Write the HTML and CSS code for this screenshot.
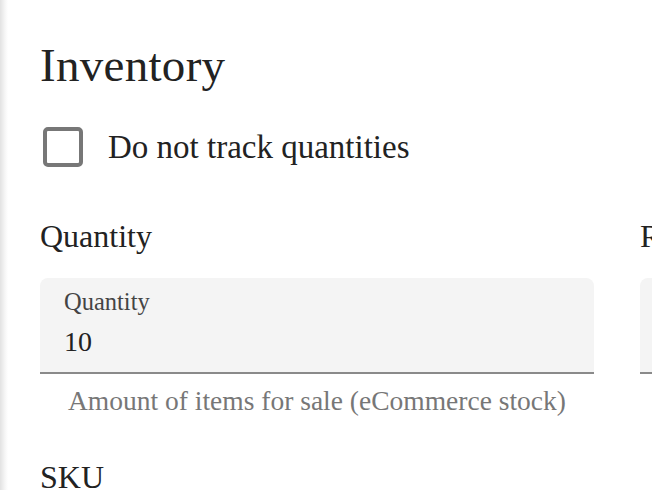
FILE: index.html
```html
<!DOCTYPE html>
<html lang="en">
<head>
<meta charset="utf-8">
<title>Inventory</title>
<link rel="stylesheet" href="styles.css">
</head>
<body>
<div class="page">
  <section class="card">
    <h2 class="card-title">Inventory</h2>
    <label class="check-row">
      <span class="checkbox"></span>
      <span class="check-label">Do not track quantities</span>
    </label>
    <div class="fields">
      <div class="field">
        <h3 class="field-heading">Quantity</h3>
        <div class="input">
          <span class="input-label">Quantity</span>
          <span class="input-value">10</span>
        </div>
        <p class="helper">Amount of items for sale (eCommerce stock)</p>
      </div>
      <div class="field">
        <h3 class="field-heading">Reserved</h3>
        <div class="input">
          <span class="input-label">Reserved</span>
          <span class="input-value">0</span>
        </div>
        <p class="helper">Quantity of items reserved for orders</p>
      </div>
    </div>
    <h3 class="field-heading sku">SKU</h3>
  </section>
</div>
</body>
</html>
```

FILE: styles.css
```css
html, body {
  margin: 0;
  padding: 0;
  overflow: hidden;
  background: #ffffff;
}

.page {
  width: 652px;
  height: 490px;
  overflow: hidden;
  padding-left: 8px;
  box-sizing: border-box;
  background: linear-gradient(to right, #e2e2e2 0px, #f6f6f6 5px, #ffffff 8px);
}

.card {
  background: #ffffff;
  width: 1300px;
  padding: 37px 0 0 32px;
  box-sizing: border-box;
  font-family: "Liberation Serif", "Times New Roman", serif;
  color: #222222;
}

.card-title {
  margin: 0;
  font-size: 47px;
  line-height: 56px;
  font-weight: 400;
  letter-spacing: 0.3px;
}

.check-row {
  display: flex;
  align-items: center;
  gap: 25px;
  margin-top: 34px;
  height: 40px;
  padding-left: 3px;
}

.checkbox {
  width: 40px;
  height: 40px;
  box-sizing: border-box;
  border: 4px solid #777777;
  border-radius: 5px;
  flex: none;
}

.check-label {
  font-size: 33px;
  line-height: 40px;
  color: #222222;
}

.fields {
  display: grid;
  grid-template-columns: 554px 554px;
  column-gap: 46px;
  margin-top: 49px;
}

.field-heading {
  margin: 0;
  font-size: 32px;
  line-height: 40px;
  font-weight: 400;
  color: #222222;
}

.input {
  margin-top: 22px;
  background: #f4f4f4;
  border-radius: 8px 8px 0 0;
  border-bottom: 2px solid #8a8a8a;
  height: 96px;
  box-sizing: border-box;
  padding: 10px 24px 0;
  display: flex;
  flex-direction: column;
}

.input-label {
  font-size: 24.5px;
  line-height: 28px;
  color: #444444;
}

.input-value {
  margin-top: 9px;
  font-size: 28px;
  line-height: 34px;
  color: #222222;
}

.helper {
  margin: 11px 0 0;
  padding-left: 28px;
  font-size: 27.5px;
  line-height: 32px;
  color: #777777;
}

.sku {
  margin-top: 40px;
}
```
